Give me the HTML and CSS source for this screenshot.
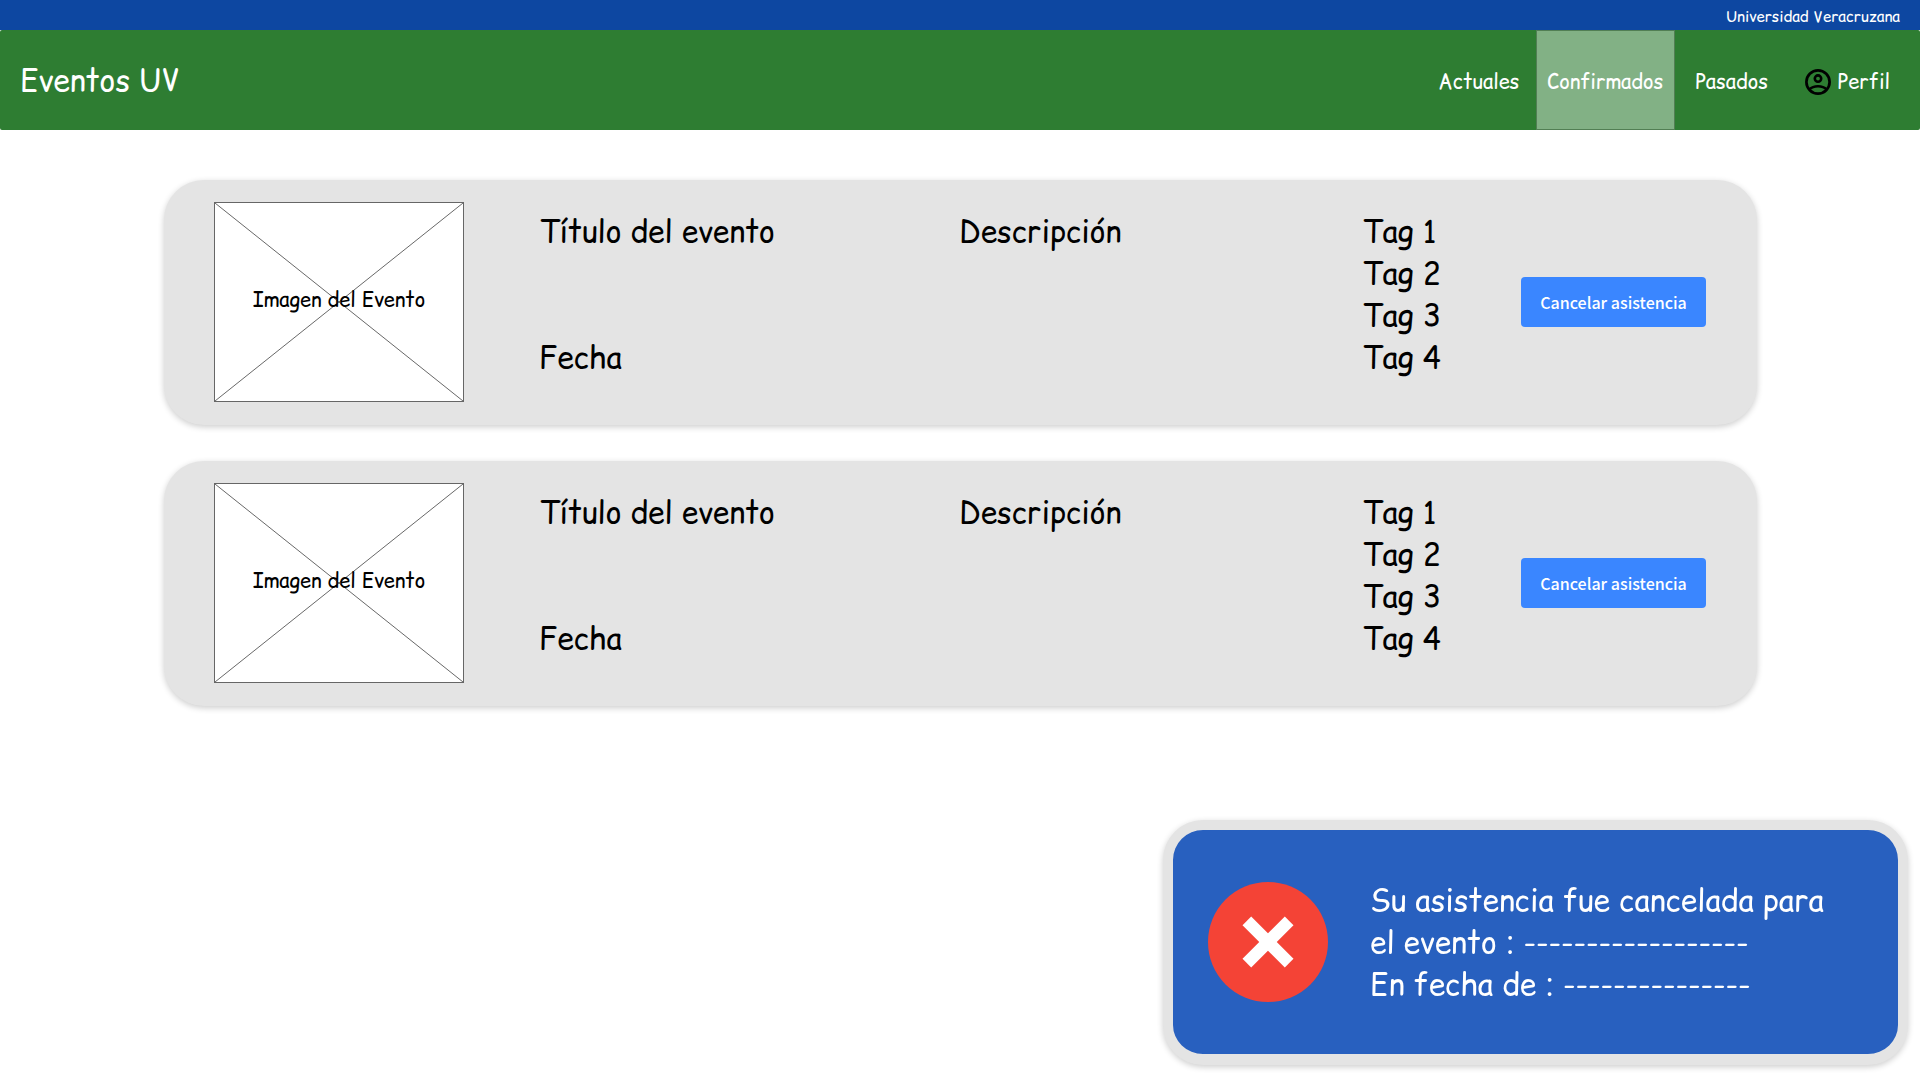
FILE: index.html
```html
<!DOCTYPE html>
<html lang="es">
<head>
  <meta charset="utf-8">
  <meta name="viewport" content="width=device-width, initial-scale=1">
  <title>Eventos UV</title>
  <link rel="stylesheet" href="styles.css">
</head>
<body>
  <div class="institution">Universidad Veracruzana</div>
  <header class="header">
    <h1 class="brand">Eventos UV</h1>
    <nav class="nav">
      <a class="nav-link" href="#actuales">Actuales</a>
      <a class="nav-link nav-link-wide nav-link-active" href="#confirmados" aria-current="page">Confirmados</a>
      <a class="nav-link" href="#pasados">Pasados</a>
      <a class="profile" href="#perfil">
        <svg class="profile-icon" viewBox="0 0 26 26" aria-hidden="true">
          <g fill="none" stroke="#000">
            <circle cx="13" cy="13" r="11.6" stroke-width="2.7"/>
            <circle cx="13" cy="9.6" r="3.2" stroke-width="2.6"/>
            <path d="M4.5 20.5C6.5 18.3 9.5 17.3 13 17.3s6.5 1 8.5 3.2" stroke-width="2.6"/>
          </g>
        </svg>
        Perfil
      </a>
    </nav>
  </header>

  <main class="events">
    <article class="event">
      <div class="event-image">
        <svg class="event-cross" viewBox="0 0 250 200" preserveAspectRatio="none" aria-hidden="true">
          <path d="M0 0L250 200M250 0L0 200"/>
        </svg>
        <span class="event-caption">Imagen del Evento</span>
      </div>
      <div class="event-info">
        <h2 class="event-title">Título del evento</h2>
        <span>Fecha</span>
      </div>
      <p class="event-description">Descripción</p>
      <ul class="event-tags">
        <li>Tag 1</li>
        <li>Tag 2</li>
        <li>Tag 3</li>
        <li>Tag 4</li>
      </ul>
      <button class="cancel" type="button">Cancelar asistencia</button>
    </article>

    <article class="event">
      <div class="event-image">
        <svg class="event-cross" viewBox="0 0 250 200" preserveAspectRatio="none" aria-hidden="true">
          <path d="M0 0L250 200M250 0L0 200"/>
        </svg>
        <span class="event-caption">Imagen del Evento</span>
      </div>
      <div class="event-info">
        <h2 class="event-title">Título del evento</h2>
        <span>Fecha</span>
      </div>
      <p class="event-description">Descripción</p>
      <ul class="event-tags">
        <li>Tag 1</li>
        <li>Tag 2</li>
        <li>Tag 3</li>
        <li>Tag 4</li>
      </ul>
      <button class="cancel" type="button">Cancelar asistencia</button>
    </article>
  </main>

  <div class="toast" role="status">
    <svg class="toast-icon" viewBox="4 4 40 40" aria-hidden="true">
      <circle cx="24" cy="24" r="20" fill="#f44336"/>
      <path fill="#fff" d="M29.600 15.500l2.900 2.900-14.100 14.100-2.900-2.900z"/>
      <path fill="#fff" d="M32.500 29.600l-2.900 2.900-14.100-14.100 2.900-2.900z"/>
    </svg>
    <p class="toast-text">Su asistencia fue cancelada para<br>el evento : ------------------<br>En fecha de : ---------------</p>
  </div>
</body>
</html>
```

FILE: styles.css
```css
* {
  box-sizing: border-box;
}

body {
  margin: 0;
  background: #fff;
  color: #000;
  font-family: "Comic Relief", "Comic Neue", Lato, sans-serif;
  font-size: 30px;
  line-height: 42px;
}

h1,
h2,
p,
ul {
  margin: 0;
  padding: 0;
  font-size: inherit;
  font-weight: 400;
}

a {
  color: inherit;
  text-decoration: none;
}

.institution {
  padding: 5px 20px 1px;
  background: #0d47a1;
  color: #fff;
  font-size: 15px;
  line-height: 24px;
  text-align: right;
}

.header {
  display: flex;
  justify-content: space-between;
  align-items: center;
  min-height: 100px;
  padding: 0 30px 0 20px;
  border-radius: 2px;
  background: #2e7d32;
  color: #fff;
}

.nav {
  display: flex;
  align-self: stretch;
  font-size: 20px;
  line-height: 28px;
}

.nav-link {
  display: flex;
  justify-content: center;
  align-items: center;
  min-width: 114px;
  padding-top: 4px;
}

.nav-link-wide {
  min-width: 139px;
}

.nav-link-active {
  border: 1px solid #527f54;
  background: #82b185;
}

.profile {
  display: flex;
  align-items: center;
  gap: 7px;
  padding: 3px 0 0 16px;
}

.profile-icon {
  width: 26px;
  height: 26px;
}

.events {
  display: grid;
  gap: 36px;
  padding: 50px 163px 50px 164px;
}

.event {
  display: grid;
  grid-template-columns: 325px 420fr 403fr 159px 185px;
  padding: 22px 51px 23px 50px;
  border-radius: 40px;
  background: #e4e4e4;
  box-shadow: 0 2px 6px rgba(0, 0, 0, 0.2);
}

.event-image {
  display: grid;
  place-items: center;
  width: 250px;
  height: 200px;
  border: 1px solid #666;
  background: #fff;
}

.event-cross,
.event-caption {
  grid-area: 1 / 1;
}

.event-cross {
  width: 100%;
  height: 198px;
  fill: none;
  stroke: #666;
}

.event-caption {
  z-index: 1;
  padding-bottom: 4px;
  font-size: 20px;
  line-height: 28px;
}

.event-info,
.event-description,
.event-tags {
  padding: 8px 0 24px;
}

.event-info {
  display: flex;
  flex-direction: column;
  justify-content: space-between;
}

.event-tags {
  list-style: none;
}

.cancel {
  align-self: center;
  height: 50px;
  padding: 0 0 1px;
  border: 0;
  border-radius: 4px;
  background: #3a86ff;
  color: #fff;
  font-family: "Source Sans Pro", "Noto Sans CJK SC", sans-serif;
  font-size: 16px;
  font-weight: 500;
  line-height: 24px;
}

.toast {
  position: fixed;
  right: 12px;
  bottom: 15px;
  display: flex;
  align-items: center;
  gap: 42px;
  width: 745px;
  min-height: 245px;
  padding: 20px 35px;
  border: 10px solid #e4e4e4;
  border-bottom-width: 11px;
  border-radius: 40px;
  background: #2860bf;
  color: #fff;
  box-shadow: 0 2px 6px rgba(0, 0, 0, 0.2);
}

.toast-icon {
  flex: none;
  width: 120px;
  height: 120px;
}
```
